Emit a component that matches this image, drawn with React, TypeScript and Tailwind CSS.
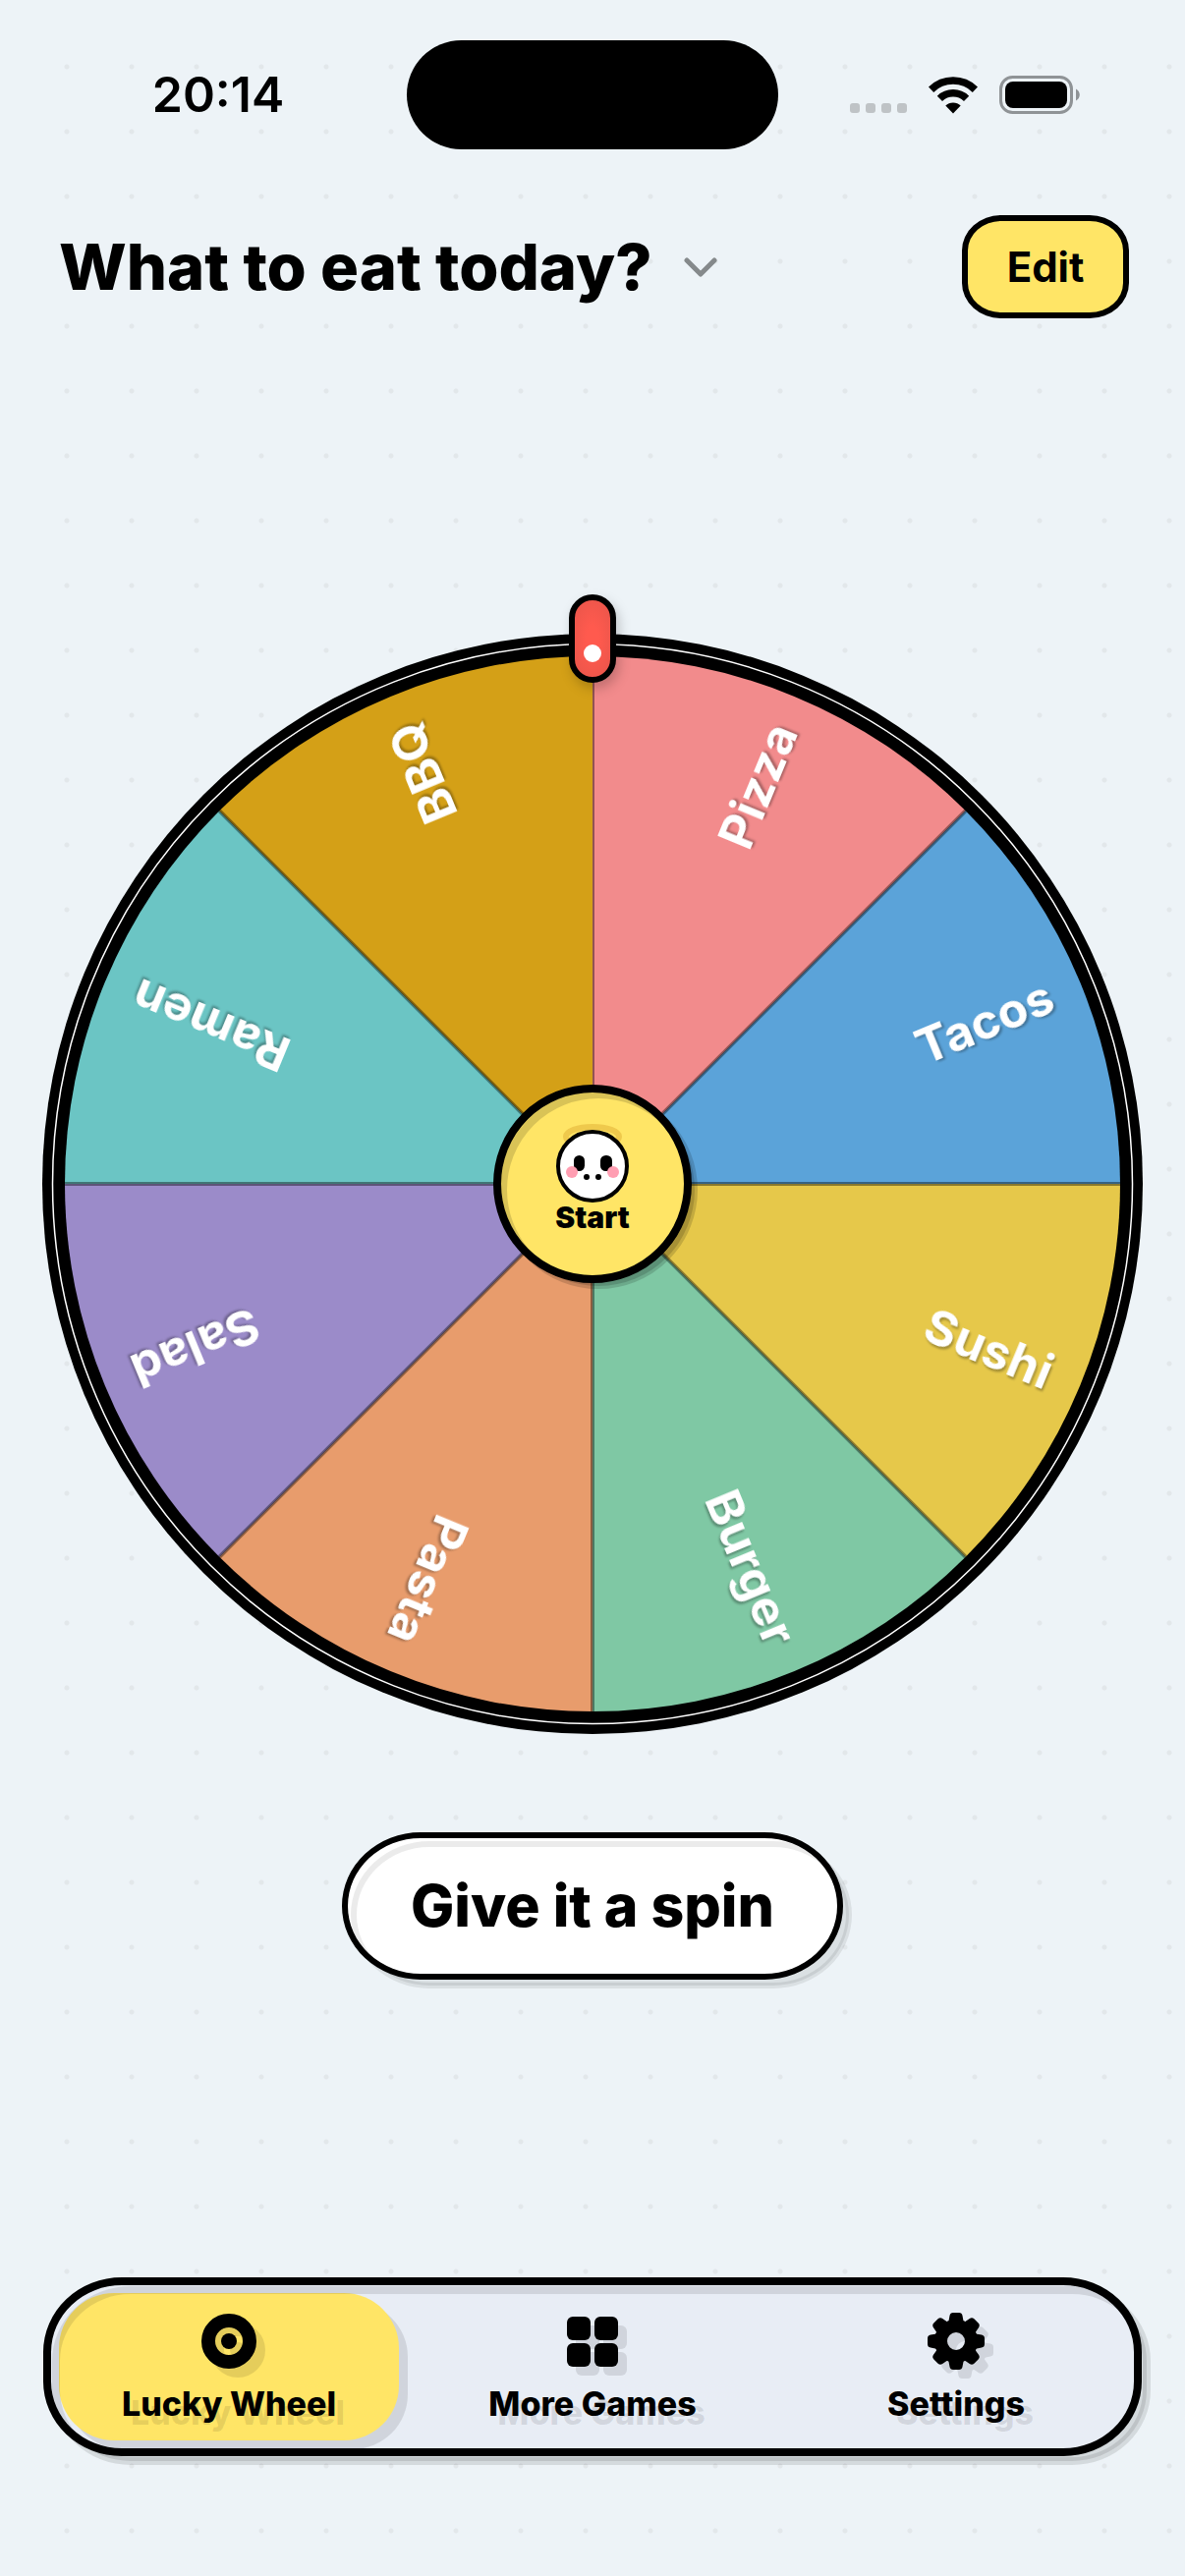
import { useId } from 'react'

interface Slice {
  label: string
  color: string
}

const SLICES: Slice[] = [
  { label: 'Pizza', color: '#f28b8c' },
  { label: 'Tacos', color: '#5ba3d9' },
  { label: 'Sushi', color: '#e6c84a' },
  { label: 'Burger', color: '#7fc8a4' },
  { label: 'Pasta', color: '#e89c6c' },
  { label: 'Salad', color: '#9b8bc9' },
  { label: 'Ramen', color: '#6bc5c4' },
  { label: 'BBQ', color: '#d4a017' },
]

const RADIUS = 537

function pointAt(deg: number, r: number) {
  const rad = (deg * Math.PI) / 180
  return { x: r * Math.cos(rad), y: r * Math.sin(rad) }
}

function slicePath(index: number, count: number) {
  const step = 360 / count
  const from = pointAt(index * step - 90, RADIUS)
  const to = pointAt((index + 1) * step - 90, RADIUS)
  return `M0 0L${from.x} ${from.y}A${RADIUS} ${RADIUS} 0 0 1 ${to.x} ${to.y}Z`
}

function StatusBar() {
  return (
    <div className="grid h-[193px] grid-cols-[1fr_378px_1fr] items-start pt-[41px]">
      <div className="flex h-[111px] items-center justify-center pl-[30px] text-[50px] font-semibold">
        20:14
      </div>
      <div className="h-[111px] rounded-[56px] bg-black" />
      <div className="flex h-[111px] items-center justify-center gap-[22px] pr-[34px]">
        <div className="flex gap-[6px] pt-[27px]">
          {[0, 1, 2, 3].map(i => (
            <span key={i} className="size-[10px] rounded-[3px] bg-[#bfc3c6]" />
          ))}
        </div>
        <svg viewBox="0 0 50 38" className="h-[38px] w-[50px]">
          <g fill="none" stroke="#000" strokeWidth="7.5">
            <path d="M2.6 13.2A32 32 0 0 1 47.4 13.2" />
            <path d="M11.4 22.4A19.5 19.5 0 0 1 38.6 22.4" />
          </g>
          <path d="M17.3 29.6A11 11 0 0 1 32.7 29.6L25 37.5Z" />
        </svg>
        <svg viewBox="0 0 82 39" className="h-[39px] w-[82px]">
          <rect x="1.5" y="1.5" width="72" height="36" rx="12" fill="none" stroke="#8f9396" strokeWidth="3" />
          <rect x="6" y="6" width="63" height="27" rx="8" />
          <path d="M78 13.5C83 16 83 23 78 25.5Z" fill="#8f9396" />
        </svg>
      </div>
    </div>
  )
}

function Wheel() {
  const pinFill = useId()

  return (
    <div className="relative">
      <svg viewBox="-560 -560 1120 1120" className="w-full" role="img" aria-label="Lucky wheel">
        <circle r="560" />
        <circle r="549.5" fill="none" stroke="#fff" strokeWidth="1.5" />
        {SLICES.map((slice, i) => (
          <path key={slice.label} d={slicePath(i, SLICES.length)} fill={slice.color} />
        ))}
        {SLICES.map((slice, i) => (
          <line
            key={slice.label}
            x1="0"
            y1={i === 0 ? 1 : 0}
            x2={RADIUS}
            y2={i === 0 ? 1 : 0}
            stroke="#000"
            strokeOpacity="0.4"
            strokeWidth={i === 0 ? 2 : 4}
            transform={`rotate(${i * 45 - 90})`}
          />
        ))}
        {SLICES.map((slice, i) => (
          <g key={slice.label} transform={`rotate(${i * 45 - 67.5})`}>
            <text
              x="505"
              y="18"
              textAnchor="end"
              fill="#fff"
              className="text-[50px] font-bold drop-shadow-[2px_2px_1px_rgba(0,0,0,0.3)]"
            >
              {slice.label}
            </text>
          </g>
        ))}
      </svg>

      <svg
        viewBox="0 0 48 90"
        className="absolute -top-[40px] left-1/2 h-[90px] w-[48px] -translate-x-1/2 drop-shadow-[3px_6px_6px_rgba(0,0,0,0.2)]"
      >
        <defs>
          <radialGradient id={pinFill}>
            <stop offset="0.3" stopColor="#ff5a4e" />
            <stop offset="1" stopColor="#ee564b" />
          </radialGradient>
        </defs>
        <rect x="3" y="3" width="42" height="84" rx="21" fill={`url(#${pinFill})`} stroke="#000" strokeWidth="6" />
        <circle cx="24" cy="60" r="9" fill="#fff" />
      </svg>

      <button className="absolute top-1/2 left-1/2 flex size-[202px] -translate-1/2 flex-col items-center rounded-full border-8 border-black bg-[#ffe566] pt-[29px] shadow-[6px_6px_0_-3px_rgba(0,0,0,0.15)]">
        <span className="absolute -inset-[8px] translate-[6px] rounded-full border-8 border-black/15" />
        <svg viewBox="0 0 76 84" className="relative h-[84px] w-[76px]">
          <ellipse cx="38" cy="16" rx="27" ry="10" fill="none" stroke="#efc94c" strokeWidth="6" />
          <circle cx="38" cy="46" r="35" fill="#fff" stroke="#000" strokeWidth="4" />
          <rect x="19" y="35" width="11" height="16" rx="5.5" />
          <rect x="46" y="35" width="12" height="16" rx="5.5" />
          <circle cx="17" cy="52" r="6" fill="#ff9eb2" />
          <circle cx="59" cy="52" r="6" fill="#ff9eb2" />
          <circle cx="32" cy="57" r="3" />
          <circle cx="44" cy="57" r="3" />
        </svg>
        <span className="relative text-[30px] leading-[28px] font-black">Start</span>
      </button>
    </div>
  )
}

function WheelIcon() {
  return (
    <svg viewBox="0 0 60 60" className="size-[60px]">
      <circle cx="30" cy="30" r="21" fill="none" stroke="#000" strokeWidth="14" />
      <circle cx="30" cy="30" r="8" />
    </svg>
  )
}

function GridIcon() {
  return (
    <svg viewBox="0 0 60 60" className="size-[60px]">
      <rect x="4" y="5" width="24" height="24" rx="6" />
      <rect x="32" y="5" width="24" height="24" rx="6" />
      <rect x="4" y="32" width="24" height="24" rx="6" />
      <rect x="32" y="32" width="24" height="24" rx="6" />
    </svg>
  )
}

function GearIcon() {
  return (
    <svg viewBox="0 0 60 60" className="size-[60px]">
      <circle cx="30" cy="30" r="15.5" fill="none" stroke="#000" strokeWidth="13" />
      {[0, 45, 90, 135, 180, 225, 270, 315].map(deg => (
        <path
          key={deg}
          d="M21 13Q23 9 23.5 4Q24 1 27 1H33Q36 1 36.500 4Q37 9 39 13Z"
          transform={`rotate(${deg} 30 30)`}
        />
      ))}
    </svg>
  )
}

const TABS = [
  { label: 'Lucky Wheel', Icon: WheelIcon, active: true },
  { label: 'More Games', Icon: GridIcon, active: false },
  { label: 'Settings', Icon: GearIcon, active: false },
]

function TabBar() {
  return (
    <nav className="relative mx-[44px] mb-[122px] flex gap-[24px] rounded-[80px/76px] border-8 border-black bg-[#e8edf5] p-[8px] shadow-[9px_9px_0_-4px_rgba(0,0,0,0.1)]">
      {TABS.map(({ label, Icon, active }) => (
        <button
          key={label}
          aria-current={active ? 'page' : undefined}
          className={
            active
              ? 'flex h-[150px] flex-1 flex-col items-center rounded-[56px] bg-[#ffe566] pt-[19px] shadow-[9px_9px_0_rgba(0,0,0,0.1)]'
              : 'flex h-[150px] flex-1 flex-col items-center pt-[19px]'
          }
        >
          <span className="drop-shadow-[9px_9px_0_rgba(0,0,0,0.1)]">
            <Icon />
          </span>
          <span className="mt-[14px] text-[34px] leading-[40px] font-extrabold text-shadow-[9px_9px_0_rgba(0,0,0,0.1)]">
            {label}
          </span>
        </button>
      ))}
      <span className="pointer-events-none absolute -inset-[8px] translate-[9px] rounded-[80px/76px] border-8 border-black/10" />
    </nav>
  )
}

export default function App() {
  return (
    <div className="relative flex min-h-screen flex-col bg-[#edf3f7] font-['Inter',sans-serif] text-black">
      <div className="absolute top-[35px] right-0 bottom-0 left-[35px] bg-[radial-gradient(circle,#e2e7ea_2px,transparent_3px)] bg-size-[66px_66px]" />

      <div className="relative flex flex-1 flex-col">
        <StatusBar />

        <header className="flex items-center justify-between pt-[26px] pr-[57px] pl-[60px]">
          <button className="flex items-center gap-[32px]">
            <h1 className="text-[65px] leading-[80px] font-extrabold">What to eat today?</h1>
            <svg viewBox="0 0 34 20" className="h-[20px] w-[34px]" fill="none" stroke="#85898b" strokeWidth="5" strokeLinecap="round" strokeLinejoin="round">
              <path d="M3 3L17 17L31 3" />
            </svg>
          </button>
          <button className="h-[105px] w-[170px] rounded-[40px/36px] border-6 border-black bg-[#ffe566] text-[42px] font-bold">
            Edit
          </button>
        </header>

        <main className="flex flex-1 flex-col items-center pt-[321px]">
          <div className="w-full px-[43px]">
            <Wheel />
          </div>
          <button className="relative mt-[100px] h-[150px] rounded-[80px/75px] border-6 border-black bg-white px-[64px] text-[59px] font-extrabold shadow-[9px_9px_0_-3px_rgba(0,0,0,0.08)]">
            <span className="absolute -inset-[6px] translate-[9px] rounded-[80px/75px] border-6 border-black/8" />
            <span className="relative">Give it a spin</span>
          </button>
        </main>

        <TabBar />
      </div>
    </div>
  )
}
